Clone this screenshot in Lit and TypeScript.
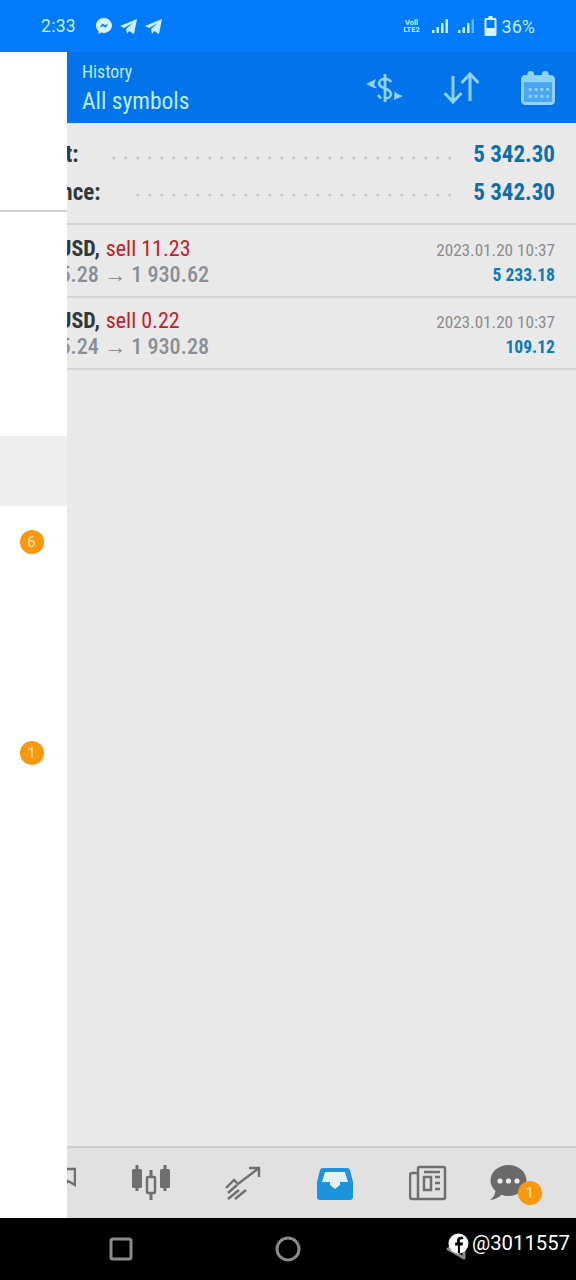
import { LitElement, html, css, svg } from "lit";
import { customElement } from "lit/decorators.js";

const trades = [
  { sym: "XAUUSD,", side: "sell 11.23", prices: "1 935.28 → 1 930.62", date: "2023.01.20 10:37", profit: "5 233.18" },
  { sym: "XAUUSD,", side: "sell 0.22", prices: "1 935.24 → 1 930.28", date: "2023.01.20 10:37", profit: "109.12" },
];

const plane = svg`<path d="M1 9 18 2l-3 15-5-3-2 3-1-5 7-6-9 5z" fill="#c9f0ff"/>`;

@customElement("app-root")
export class AppRoot extends LitElement {
  static styles = css`
    :host { display: block; width: 576px; height: 1280px; overflow: hidden; font-family: Roboto, "Liberation Sans", sans-serif; position: relative; }
    .page { display: flex; flex-direction: column; height: 1280px; background: #e9e9e9; }
    .status { height: 52px; flex: none; background: #017afb; display: flex; align-items: center; padding: 0 41px; color: #c4eeff; box-sizing: border-box; }
    .time { font-size: 17.5px; letter-spacing: .3px; width: 54px; }
    .sicons { display: flex; gap: 6px; align-items: center; }
    .sright { margin-left: auto; display: flex; align-items: center; gap: 10px; font-size: 18px; }
    .volte { font-size: 7.5px; line-height: 7.5px; font-weight: 700; text-align: center; width: 20px; }
    .batt { display: flex; align-items: center; gap: 5px; }
    .header { height: 71px; flex: none; background: #0273ea; display: flex; align-items: center; padding-left: 82px; padding-right: 21px; box-sizing: border-box; color: #bdeeff; }
    .titles { display: flex; flex-direction: column; font-stretch: 75%; }
    .t1 { font-size: 17.8px; line-height: 22px; margin-top: 4px; }
    .t2 { font-size: 23.5px; line-height: 36px; }
    .hicons { margin-left: auto; display: flex; align-items: center; gap: 39px; }
    .hicons svg:last-child { margin-left: 2px; }
    .summary { height: 102px; flex: none; box-sizing: border-box; padding: 13px 21px 0 21px; border-bottom: 2px solid #d4d4d4; font-stretch: 75%; }
    .srow { display: flex; align-items: center; height: 37.5px; }
    .label { font-size: 23px; font-weight: 700; color: #33383d; }
    .leader { flex: 1; height: 4px; margin: 6px 22px 0 29px; background-image: radial-gradient(circle at 10px 2px, #c2c2c2 1.3px, transparent 1.7px); background-size: 12px 4px; background-position: right; background-repeat: repeat-x; }
    .value { font-size: 23px; font-weight: 700; color: #0a70ad; }
    .trade { height: 73px; flex: none; box-sizing: border-box; padding: 11px 21px 0 21px; border-bottom: 2px solid #d4d4d4; display: flex; justify-content: space-between; font-stretch: 75%; }
    .trade + .trade { height: 72px; padding-top: 10px; }
    .col { display: flex; flex-direction: column; }
    .col.r { align-items: flex-end; padding-top: 2px; }
    .l1 { font-size: 22px; line-height: 26px; display: flex; gap: 6px; }
    .sym { font-weight: 700; color: #33383d; }
    .side { color: #c0202c; }
    .l2 { font-size: 22.2px; line-height: 25px; font-weight: 500; color: #8a8f96; }
    .date { font-size: 17.2px; line-height: 25px; color: #8c8c8c; }
    .profit { font-size: 17.6px; line-height: 25px; font-weight: 700; color: #0a7ab8; }
    .spacer { flex: 1; }
    .nav { height: 72px; flex: none; box-sizing: border-box; background: #e1e1e1; border-top: 2px solid #cfcfcf; display: flex; align-items: center; padding-left: 12px; }
    .nitem { width: 92.4px; flex: none; display: flex; justify-content: center; }
    .chat { position: relative; margin-left: -24px; }
    .nbadge { position: absolute; right: -15px; bottom: -4px; background: #ef8f10; width: 25px; height: 25px; }
    .badge { width: 24px; height: 24px; border-radius: 50%; background: #f7980f; color: #ffe9b0; font-size: 15px; display: flex; align-items: center; justify-content: center; }
    .sys { height: 62px; flex: none; background: #000; display: grid; grid-template-columns: 167px 1fr 167px; align-items: center; justify-items: center; box-sizing: border-box; position: relative; }
    .square { margin-left: 75px; }
    .back { margin-right: 74px; }
    .drawer { position: absolute; left: 0; top: 52px; width: 67px; height: 1166px; background: #fff; display: flex; flex-direction: column; }
    .account { height: 160px; flex: none; box-sizing: border-box; border-bottom: 2px solid #cfcfcf; margin-bottom: 12px; }
    .drow { height: 70.6px; flex: none; display: flex; align-items: center; padding-left: 19.5px; box-sizing: border-box; }
    .drow.on { background: #eeeeee; }
    .mark { position: absolute; right: 6px; top: 13px; display: flex; align-items: center; gap: 3px; color: #fff; font-size: 20.3px; }
    .fb { display: block; }
  `;

  render() {
    return html`
      <div class="page">
        <div class="status">
          <span class="time">2:33</span>
          <span class="sicons">
            <svg width="18" height="18" viewBox="0 0 18 18"><path d="M9 1c-4.5 0-8 3.2-8 7.6 0 2.3 1 4.3 2.6 5.6V17l2.6-1.4c.9.2 1.8.3 2.8.3 4.5 0 8-3.2 8-7.3S13.500 1 9 1z" fill="#d5f3ff"/><path d="m4.500 10.800 3-4.400 2.400 1.900 3.500-1.900-3 4.400-2.400-1.900z" fill="#017afb"/></svg>
            <svg width="19" height="19" viewBox="0 0 19 19">${plane}</svg>
            <svg width="19" height="19" viewBox="0 0 19 19">${plane}</svg>
          </span>
          <span class="sright">
            <span class="volte">Voll<br />LTE2</span>
            <svg width="16" height="16" viewBox="0 0 16 16"><path d="M0 12h2.500v3H0zM4.500 9H7v6H4.500zM9 5h2.500v10H9zM13.500 1H16v14h-2.500z" fill="#c4eeff"/></svg>
            <svg width="16" height="16" viewBox="0 0 16 16"><path d="M0 12h2.500v3H0zM4.500 9H7v6H4.500zM9 5h2.500v10H9z" fill="#c4eeff"/><path d="M13.500 1H16v14h-2.500z" fill="#5db6f5"/></svg>
            <span class="batt">
              <svg width="13" height="20" viewBox="0 0 12 20"><path d="M4 0h4v2h2.500A1.500 1.500 0 0 1 12 3.500v15a1.500 1.500 0 0 1-1.500 1.500h-9A1.500 1.500 0 0 1 0 18.500v-15A1.500 1.500 0 0 1 1.500 2H4z" fill="#d5f3ff"/><rect x="2" y="4" width="8" height="8" fill="#017afb"/></svg>
              <span>36%</span>
            </span>
          </span>
        </div>
        <div class="header">
          <div class="titles"><span class="t1">History</span><span class="t2">All symbols</span></div>
          <div class="hicons">
            <svg width="40" height="34" viewBox="0 0 40 34" fill="none" stroke="#8fd3fb">
              <path d="M21 3v28" stroke-width="2.800"/>
              <path d="M27 11c-1-2-3.500-3-6-3-3.500 0-6 1.800-6 4.500 0 5.500 12 4 12 10.500 0 2.800-2.500 4.500-6 4.500" stroke-width="2.600"/>
              <path d="M2 13l10-5-2 6 3 3-3 0z" fill="#8fd3fb" stroke="none"/>
              <path d="M39 25l-9 4 .5-9 3 3z" fill="#8fd3fb" stroke="none"/>
              <path d="M14 24l3 3.500" stroke-width="2.600"/>
            </svg>
            <svg width="37" height="32" viewBox="0 0 37 32" fill="none" stroke="#8fd3fb" stroke-width="3">
              <path d="M10 4v26M1.500 21l8.500 9 8.500-9"/><path d="M27 29V2M18.500 11L27 2l8.500 9"/>
            </svg>
            <svg width="34" height="36" viewBox="0 0 35 36">
              <rect x="1.500" y="6" width="32" height="28" rx="3" fill="#4aa6f0" stroke="#8fd3fb" stroke-width="3"/>
              <rect x="1.500" y="6" width="32" height="6" fill="#8fd3fb"/>
              <circle cx="10" cy="4" r="3.500" fill="#8fd3fb"/><circle cx="25" cy="4" r="3.500" fill="#8fd3fb"/>
              <g fill="#8fd3fb"><rect x="8" y="18" width="3" height="3"/><rect x="14" y="18" width="3" height="3"/><rect x="20" y="18" width="3" height="3"/><rect x="26" y="18" width="3" height="3"/><rect x="8" y="25" width="3" height="3"/><rect x="14" y="25" width="3" height="3"/><rect x="20" y="25" width="3" height="3"/><rect x="26" y="25" width="3" height="3"/></g>
            </svg>
          </div>
        </div>
        <div class="summary">
          <div class="srow"><span class="label">Profit:</span><span class="leader"></span><span class="value">5 342.30</span></div>
          <div class="srow"><span class="label">Balance:</span><span class="leader"></span><span class="value">5 342.30</span></div>
        </div>
        ${trades.map(
          (t) => html`<div class="trade">
            <div class="col">
              <div class="l1"><span class="sym">${t.sym}</span><span class="side">${t.side}</span></div>
              <div class="l2">${t.prices}</div>
            </div>
            <div class="col r"><span class="date">${t.date}</span><span class="profit">${t.profit}</span></div>
          </div>`
        )}
        <div class="spacer"></div>
        <div class="nav">
          <div class="nitem">
            <svg width="36" height="36" viewBox="0 0 36 36" fill="none" stroke="#6f6f6f" stroke-width="2.500"><path d="M14 4h21v16l-7-4-4 4"/></svg>
          </div>
          <div class="nitem">
            <svg width="38" height="36" viewBox="0 0 38 36" fill="#6f6f6f" stroke="#6f6f6f">
              <path d="M5 0v26M33 0v26" stroke-width="3"/><rect x="0" y="4" width="10" height="19" rx="1.500" stroke="none"/><rect x="28" y="4" width="10" height="19" rx="1.500" stroke="none"/>
              <path d="M19 5v11M19 29v6" stroke-width="3" fill="none"/><rect x="15" y="12" width="8" height="16" rx="1" fill="#e1e1e1" stroke-width="2.500"/>
            </svg>
          </div>
          <div class="nitem">
            <svg width="36" height="34" viewBox="0 0 36 34" fill="none" stroke="#6f6f6f" stroke-width="2.400"><path d="M1 22l8-8 4 4L34 2"/><path d="M24 2h10v9"/><path d="M3 33l11-9M10 33l11-9"/><path d="M3 27l9-8"/></svg>
          </div>
          <div class="nitem">
            <svg width="36" height="33" viewBox="0 0 36 33"><path d="M6 1h24a3 3 0 0 1 3 2l3 12v15a3 3 0 0 1-3 3H3a3 3 0 0 1-3-3V15L3 3a3 3 0 0 1 3-2z" fill="#1b93dd"/><path d="M8 5h20l3 10h-8v3l-5 4-5-4v-3H5z" fill="#e4f1f9"/></svg>
          </div>
          <div class="nitem">
            <svg width="38" height="36" viewBox="0 0 38 36" fill="none" stroke="#6f6f6f" stroke-width="2.500"><path d="M9 8H3a2 2 0 0 0-2 2v22a2 2 0 0 0 2 2h6"/><rect x="9" y="2" width="27" height="32" rx="1.500"/><rect x="15" y="12" width="7" height="13"/><path d="M15 7h16M26 12h5M26 18h5M26 24h5"/></svg>
          </div>
          <div class="nitem">
            <div class="chat">
              <svg width="37" height="36" viewBox="0 0 37 36" style="display:block"><path d="M18.500 0C28.500 0 36.500 7 36.500 15.500S28.500 31 18.500 31c-2.500 0-5-.4-7-1.300C8.500 32.500 5 34.500 0 35c3-2 5-5 5.500-9C2.500 23 .5 19.500.5 15.500.5 7 8.500 0 18.500 0z" fill="#6a6a6a"/><circle cx="10" cy="16" r="2.600" fill="#eee"/><circle cx="18.500" cy="16" r="2.600" fill="#eee"/><circle cx="27" cy="16" r="2.600" fill="#eee"/></svg>
              <span class="badge nbadge">1</span>
            </div>
          </div>
        </div>
        <div class="sys">
          <svg class="square" width="24" height="24" viewBox="0 0 24 24"><rect x="2" y="2" width="20" height="20" rx="2" fill="none" stroke="#8b8b8b" stroke-width="3"/></svg>
          <svg width="26" height="26" viewBox="0 0 26 26"><circle cx="13" cy="13" r="11" fill="none" stroke="#8b8b8b" stroke-width="3"/></svg>
          <svg class="back" width="24" height="24" viewBox="0 0 24 24"><path d="M20 3 4 12l16 9z" fill="none" stroke="#8b8b8b" stroke-width="3" stroke-linejoin="round"/></svg>
          <div class="mark">
            <svg class="fb" width="21" height="21" viewBox="0 0 22 22"><circle cx="11" cy="11" r="10.500" fill="#fff"/><path d="M12.500 21v-8h2.800l.5-3h-3.300V8.200c0-1 .4-1.600 1.700-1.600h1.700V4c-.7-.1-1.500-.2-2.300-.2-2.600 0-4.200 1.500-4.200 4.200v2H7.500v3h2.900v8z" fill="#000"/></svg>
            <span>@3011557</span>
          </div>
        </div>
      </div>
      <div class="drawer">
        <div class="account"></div>
        <div class="drow"></div>
        <div class="drow"></div>
        <div class="drow"></div>
        <div class="drow on"></div>
        <div class="drow"><span class="badge">6</span></div>
        <div class="drow"></div>
        <div class="drow"></div>
        <div class="drow"><span class="badge">1</span></div>
      </div>
    `;
  }
}
